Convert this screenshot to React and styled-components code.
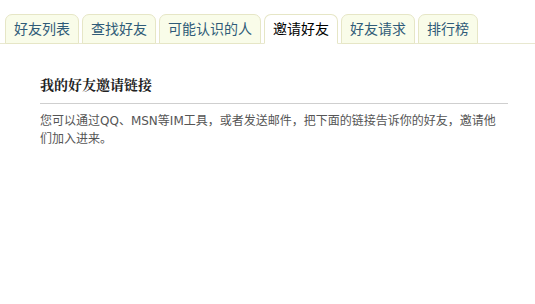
import React from 'react';
import styled, { createGlobalStyle } from 'styled-components';

const GlobalStyle = createGlobalStyle`
  body {
    margin: 0;
    background: #ffffff;
    font-family: "Liberation Sans", "Noto Sans CJK SC", sans-serif;
  }
`;

const tabs = ['好友列表', '查找好友', '可能认识的人', '邀请好友', '好友请求', '排行榜'];
const activeIndex = 3;

const App = () => (
  <Page>
    <GlobalStyle />
    <TabBar>
      {tabs.map((t, i) => (
        <Tab key={t} active={i === activeIndex}>{t}</Tab>
      ))}
    </TabBar>
    <Content>
      <Heading>我的好友邀请链接</Heading>
      <Intro>
        您可以通过QQ、MSN等IM工具，或者发送邮件，把下面的链接告诉你的好友，邀请他们加入进来。
      </Intro>
    </Content>
  </Page>
);

export default App;

const Page = styled.div`
  width: 535px;
  height: 304px;
  background: #fff;
`;

const TabBar = styled.div`
  display: flex;
  align-items: flex-end;
  gap: 3px;
  padding: 14px 0 0 5px;
  border-bottom: 1px solid #e8e8d0;
`;

const Tab = styled.div`
  height: 28px;
  line-height: 28px;
  padding: 0 8px;
  margin-bottom: -1px;
  font-size: 14px;
  color: ${p => (p.active ? '#000' : '#2f5b78')};
  background: ${p => (p.active ? '#fff' : '#f9fce9')};
  border: 1px solid #e6e6c6;
  border-bottom-color: ${p => (p.active ? '#fff' : '#e6e6c6')};
  border-radius: 7px 7px 0 0;
  white-space: nowrap;
`;

const Content = styled.div`
  padding: 30px 27px 0 40px;
`;

const Heading = styled.h3`
  margin: 0;
  padding-bottom: 9px;
  border-bottom: 1px solid #cfcfcf;
  font-size: 14px;
  font-weight: bold;
  line-height: 20px;
  color: #222;
  font-family: "Noto Serif CJK SC", "Noto Sans CJK SC", serif;
`;

const Intro = styled.p`
  margin: 8px 0 0;
  max-width: 462px;
  font-family: "DejaVu Sans", "Noto Sans CJK SC", sans-serif;
  font-size: 12px;
  line-height: 18px;
  color: #555;
`;
